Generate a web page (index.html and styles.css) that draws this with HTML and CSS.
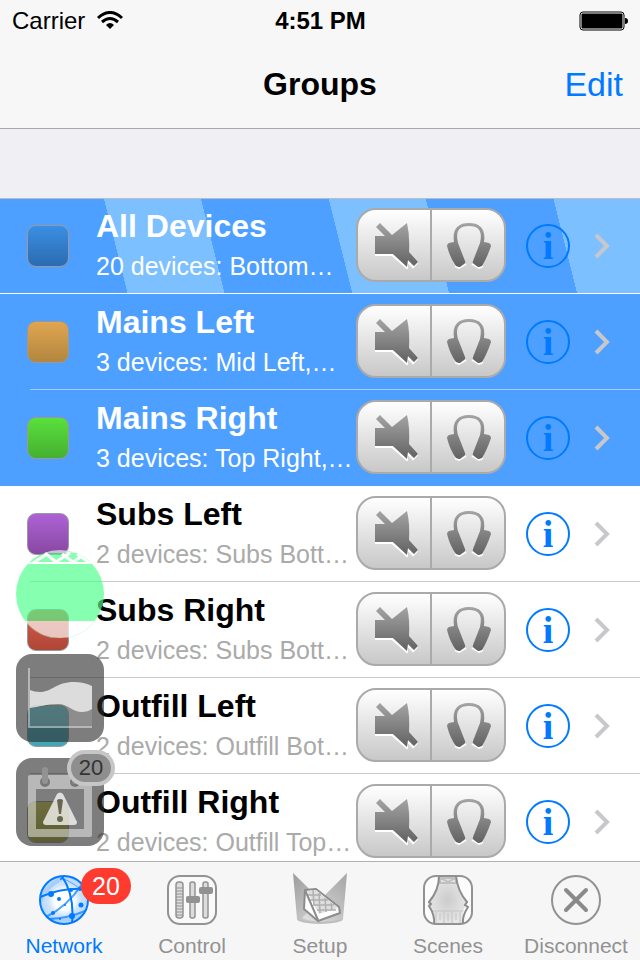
FILE: index.html
```html
<!DOCTYPE html>
<html lang="en">
<head>
    <meta charset="UTF-8">
    <meta name="viewport" content="width=device-width, initial-scale=1.0">
    <title>Groups</title>
    <link rel="stylesheet" href="styles.css">
</head>
<body>
    <!-- Shared icons -->
    <svg class="sprites" width="0" height="0" aria-hidden="true">
        <defs>
            <linearGradient id="metal" x1="0" y1="0" x2="0" y2="1">
                <stop offset="0" stop-color="#a4a4a4"/>
                <stop offset="1" stop-color="#626262"/>
            </linearGradient>
            <linearGradient id="beam-left" x1="0" y1="0" x2="1" y2="1">
                <stop offset="0" stop-color="#9c9c9c"/>
                <stop offset="1" stop-color="#e2e2e2"/>
            </linearGradient>
            <linearGradient id="beam-right" x1="1" y1="0" x2="0" y2="1">
                <stop offset="0" stop-color="#a4a4a4"/>
                <stop offset="1" stop-color="#e2e2e2"/>
            </linearGradient>
            <radialGradient id="globe-fill">
                <stop offset="0.4" stop-color="#ffffff"/>
                <stop offset="0.65" stop-color="#cfe5fb"/>
                <stop offset="1" stop-color="#b4d6fa"/>
            </radialGradient>
            <radialGradient id="stage-fill">
                <stop offset="0" stop-color="#cccccc"/>
                <stop offset="1" stop-color="#e6e6e6"/>
            </radialGradient>
            <clipPath id="globe-clip"><circle cx="28" cy="28" r="24"/></clipPath>
            <clipPath id="level-clip"><circle cx="44" cy="44" r="44"/></clipPath>
        </defs>
        <symbol id="mute" viewBox="0 0 48 48">
            <path d="M5 34H22L37 47V40L43 46L48 41" fill="none" stroke="#fff" stroke-width="2"/>
            <path d="M5 15H15L6 6L10 2L22 14L37 2Q40 15 39 31L48 41L44 45L38 39L37 46L23 33H5Z" fill="url(#metal)"/>
        </symbol>
        <symbol id="phones" viewBox="0 0 48 48">
            <path d="M11 45L15 47L22 43M28 43L35 47L39 45" fill="none" stroke="#fff" stroke-width="2"/>
            <path d="M3 25Q3 23 5 22L10 21C8 8 14 2 25 2S42 8 40 21L45 22Q47 23 47 25Q43 37 38 45Q36 46 34 46L30 43Q28 42 29 40L36 22C39 9 34 5 25 5S11 9 14 22L21 40Q22 42 20 43L16 46Q14 46 12 45Q6 37 3 25Z" fill="url(#metal)"/>
        </symbol>
        <symbol id="chevron" viewBox="0 0 16 26">
            <path d="M2 2L13 13L2 24" fill="none" stroke="#c7c7cc" stroke-width="4"/>
        </symbol>
    </svg>

    <header>
        <div class="status-bar">
            <div class="carrier">
                <span>Carrier</span>
                <svg width="26" height="20" viewBox="0 0 26 20">
                    <path d="M1 7Q13 -4 25 7M5 11Q13 4 21 11" fill="none" stroke="#000" stroke-width="3"/>
                    <path d="M9 14Q13 10 17 14L13 18Z"/>
                </svg>
            </div>
            <span class="time">4:51 PM</span>
            <div class="battery">
                <svg width="50" height="20" viewBox="0 0 50 20">
                    <rect x="1" y="1" width="44" height="18" rx="3" fill="none" stroke="#000"/>
                    <rect x="2.5" y="2.5" width="41" height="15" rx="1"/>
                    <path d="M46 7Q49 7 49 10T46 13Z"/>
                </svg>
            </div>
        </div>
        <div class="nav-bar">
            <h1>Groups</h1>
            <a href="#edit">Edit</a>
        </div>
    </header>

    <main>
        <ul class="groups">
            <li class="group selected striped">
                <span class="swatch blue"></span>
                <div class="group-text">
                    <h2>All Devices</h2>
                    <p>20 devices: Bottom…</p>
                </div>
                <div class="switch">
                    <button type="button" aria-label="Mute"><svg><use href="#mute"/></svg></button>
                    <button type="button" aria-label="Solo"><svg><use href="#phones"/></svg></button>
                </div>
                <button type="button" class="info">i</button>
                <svg class="chevron"><use href="#chevron"/></svg>
            </li>
            <li class="group selected">
                <span class="swatch orange"></span>
                <div class="group-text">
                    <h2>Mains Left</h2>
                    <p>3 devices: Mid Left,…</p>
                </div>
                <div class="switch">
                    <button type="button" aria-label="Mute"><svg><use href="#mute"/></svg></button>
                    <button type="button" aria-label="Solo"><svg><use href="#phones"/></svg></button>
                </div>
                <button type="button" class="info">i</button>
                <svg class="chevron"><use href="#chevron"/></svg>
            </li>
            <li class="group selected last-selected">
                <span class="swatch green"></span>
                <div class="group-text">
                    <h2>Mains Right</h2>
                    <p>3 devices: Top Right,…</p>
                </div>
                <div class="switch">
                    <button type="button" aria-label="Mute"><svg><use href="#mute"/></svg></button>
                    <button type="button" aria-label="Solo"><svg><use href="#phones"/></svg></button>
                </div>
                <button type="button" class="info">i</button>
                <svg class="chevron"><use href="#chevron"/></svg>
            </li>
            <li class="group">
                <span class="swatch purple"></span>
                <div class="group-text">
                    <h2>Subs Left</h2>
                    <p>2 devices: Subs Bott…</p>
                </div>
                <div class="switch">
                    <button type="button" aria-label="Mute"><svg><use href="#mute"/></svg></button>
                    <button type="button" aria-label="Solo"><svg><use href="#phones"/></svg></button>
                </div>
                <button type="button" class="info">i</button>
                <svg class="chevron"><use href="#chevron"/></svg>
            </li>
            <li class="group">
                <span class="swatch red"></span>
                <div class="group-text">
                    <h2>Subs Right</h2>
                    <p>2 devices: Subs Bott…</p>
                </div>
                <div class="switch">
                    <button type="button" aria-label="Mute"><svg><use href="#mute"/></svg></button>
                    <button type="button" aria-label="Solo"><svg><use href="#phones"/></svg></button>
                </div>
                <button type="button" class="info">i</button>
                <svg class="chevron"><use href="#chevron"/></svg>
            </li>
            <li class="group">
                <span class="swatch teal"></span>
                <div class="group-text">
                    <h2>Outfill Left</h2>
                    <p>2 devices: Outfill Bot…</p>
                </div>
                <div class="switch">
                    <button type="button" aria-label="Mute"><svg><use href="#mute"/></svg></button>
                    <button type="button" aria-label="Solo"><svg><use href="#phones"/></svg></button>
                </div>
                <button type="button" class="info">i</button>
                <svg class="chevron"><use href="#chevron"/></svg>
            </li>
            <li class="group">
                <span class="swatch yellow"></span>
                <div class="group-text">
                    <h2>Outfill Right</h2>
                    <p>2 devices: Outfill Top…</p>
                </div>
                <div class="switch">
                    <button type="button" aria-label="Mute"><svg><use href="#mute"/></svg></button>
                    <button type="button" aria-label="Solo"><svg><use href="#phones"/></svg></button>
                </div>
                <button type="button" class="info">i</button>
                <svg class="chevron"><use href="#chevron"/></svg>
            </li>
        </ul>

        <!-- Floating shortcuts over the list -->
        <div class="floating">
            <button type="button" class="level" aria-label="Level">
                <svg width="88" height="88" viewBox="0 0 88 88">
                    <g clip-path="url(#level-clip)">
                        <rect width="88" height="3" fill="#e0dce4" fill-opacity="0.8"/>
                        <rect y="3" width="88" height="68" fill="#4cff8a" fill-opacity="0.67"/>
                        <rect y="71" width="88" height="17" fill="#fff" fill-opacity="0.68"/>
                        <path d="M8 13H80" stroke="#fff" stroke-width="2"/>
                        <path d="M17 13L31 4M29 3L40 12L54 3M46 4L57 12L69 4M61 4L74 13" fill="none" stroke="#fff" stroke-width="3"/>
                    </g>
                    <path d="M9 71A44 44 0 0 0 79 71" fill="none" stroke="#b4f5cc" stroke-opacity="0.4"/>
                </svg>
            </button>
            <button type="button" class="tile" aria-label="Chart">
                <svg width="88" height="88" viewBox="0 0 88 88">
                    <path d="M14 54C24 54 32 50 42 50S56 58 66 58Q72 58 76 55V72H14Z" fill="#fff" fill-opacity="0.13"/>
                    <path d="M14 36Q18 38 24 38C36 38 40 28 58 28Q68 28 76 32V55Q72 58 66 58C56 58 52 50 42 50C30 50 24 53 14 54Z" fill="#fff" fill-opacity="0.73"/>
                    <path d="M13 14V73H76" fill="none" stroke="#fff" stroke-opacity="0.45" stroke-width="2"/>
                </svg>
            </button>
            <button type="button" class="tile" aria-label="Events">
                <svg width="88" height="88" viewBox="0 0 88 88">
                    <path fill-rule="evenodd" d="M14 17H74Q76 17 76 19V77Q76 79 74 79H14Q12 79 12 77V19Q12 17 14 17ZM20 31V71H68V31Z" fill="#fff" fill-opacity="0.46"/>
                    <circle cx="29" cy="24" r="5" fill="#777"/>
                    <circle cx="59" cy="24" r="5" fill="#777"/>
                    <path d="M29 12V23M59 12V23" stroke="#929292" stroke-width="6" stroke-linecap="round"/>
                    <path d="M41 36Q44 33 47 36L61 64Q61 67 58 67H30Q27 67 27 64Z" fill="#fff" fill-opacity="0.74"/>
                    <path d="M41 42Q44 40 47 42L45 56H43Z" fill="#666652"/>
                    <circle cx="44" cy="61" r="3" fill="#666652"/>
                </svg>
                <span class="count">20</span>
            </button>
        </div>
    </main>

    <nav class="tab-bar">
        <a href="#network" class="active">
            <svg width="56" height="56" viewBox="0 0 56 56">
                <circle cx="28" cy="28" r="24" fill="url(#globe-fill)"/>
                <g clip-path="url(#globe-clip)" fill="none" stroke="#007aff">
                    <path d="M4 30Q9 15 25 7M14 46Q28 52 46 42" stroke="#a8cffa" stroke-width="4"/>
                    <path d="M4 25Q26 15 52 17M25 3Q39 22 36 52" stroke-width="2"/>
                    <path d="M10 45Q32 34 46 12M4 46Q22 50 52 38" stroke-width="2" stroke-opacity="0.7"/>
                    <path d="M25 6Q38 10 52 24" stroke-opacity="0.6"/>
                </g>
                <g fill="#007aff">
                    <circle cx="15" cy="22" r="3"/>
                    <circle cx="35" cy="18" r="2"/>
                    <circle cx="44" cy="17" r="2"/>
                    <circle cx="23" cy="27" r="2"/>
                    <circle cx="45" cy="33" r="2.5"/>
                    <circle cx="17" cy="41" r="2"/>
                    <circle cx="36" cy="44" r="3"/>
                    <circle cx="25" cy="7" r="1"/>
                    <circle cx="29" cy="33" r="1"/>
                    <circle cx="24" cy="47" r="1"/>
                </g>
                <circle cx="28" cy="28" r="24" fill="none" stroke="#007aff" stroke-width="2"/>
            </svg>
            <span class="badge">20</span>
            <span>Network</span>
        </a>
        <a href="#control">
            <svg width="56" height="56" viewBox="0 0 56 56">
                <rect x="4" y="4" width="48" height="48" rx="12" fill="#fff" fill-opacity="0.4" stroke="#929292" stroke-width="2"/>
                <g fill="#dcdcdc" stroke="#929292" stroke-width="1.5">
                    <rect x="12" y="10" width="7" height="36" rx="3"/>
                    <rect x="26" y="10" width="5" height="36" rx="2"/>
                    <rect x="39" y="10" width="5" height="36" rx="2"/>
                </g>
                <path d="M12 16H19M12 19H19M12 22H19M12 25H19M12 28H19M12 31H19M12 34H19M12 37H19M12 40H19M12 43H19" stroke="#929292"/>
                <rect x="22" y="24" width="14" height="7" rx="2" fill="#929292"/>
                <rect x="35" y="15" width="14" height="7" rx="2" fill="#929292"/>
            </svg>
            <span>Control</span>
        </a>
        <a href="#setup">
            <svg width="56" height="56" viewBox="0 0 56 56">
                <ellipse cx="28" cy="47" rx="23" ry="5" fill="#bdbdbd"/>
                <path d="M1 1L47 46Q28 53 5 47Z" fill="url(#beam-left)"/>
                <path d="M55 1L10 46Q28 53 51 47Z" fill="url(#beam-right)"/>
                <path d="M13 18L24 17L47 35L48 41L26 49L12 37Z" fill="#fff" stroke="#8c8c8c" stroke-width="2" stroke-linejoin="round"/>
                <path d="M15 19L24 18L46 36L27 42Z" fill="#dedede"/>
                <path d="M16 23H29M18 28H36M22 33H42M25 38H44M21 18L22 34M27 21L28 41M33 26L34 40M39 31L40 38" fill="none" stroke="#b0b0b0" stroke-width="1.5"/>
                <path d="M13 18L26 48" stroke="#8c8c8c" stroke-width="2"/>
            </svg>
            <span>Setup</span>
        </a>
        <a href="#scenes">
            <svg width="56" height="56" viewBox="0 0 56 56">
                <rect x="4" y="4" width="48" height="48" rx="12" fill="#fff" fill-opacity="0.7"/>
                <path d="M19 4H37C37 14 41 24 47 31L44 37Q42 44 43 52H14Q15 44 10 37L8 31C15 24 19 14 19 4Z" fill="url(#stage-fill)"/>
                <path d="M20 6H36V11H20ZM21 6L28 10L35 6" fill="none" stroke="#c0c0c0" stroke-width="2"/>
                <path d="M12 39H43M16 40V51M20 41V48M24 40V51M28 41V49M32 40V51M36 41V48M40 40V51" stroke="#c4c4c4"/>
                <path d="M19 4C19 14 15 23 9 30L11 32L9 34Q15 43 14 52M36 4C37 14 41 23 47 30L45 33L48 35Q42 44 43 52" fill="none" stroke="#8c8c8c" stroke-width="2"/>
                <rect x="4" y="4" width="48" height="48" rx="12" fill="none" stroke="#929292" stroke-width="2"/>
            </svg>
            <span>Scenes</span>
        </a>
        <a href="#disconnect">
            <svg width="56" height="56" viewBox="0 0 56 56">
                <circle cx="28" cy="28" r="24" fill="none" stroke="#929292" stroke-width="2"/>
                <path d="M18 18L38 38M38 18L18 38" stroke="#8a8a8a" stroke-width="4" stroke-linecap="round"/>
            </svg>
            <span>Disconnect</span>
        </a>
    </nav>
</body>
</html>
```
FILE: styles.css
```css
* {
    box-sizing: border-box;
}

body {
    margin: 0;
    display: flex;
    flex-direction: column;
    height: 100vh;
    font-family: "Liberation Sans", Arial, sans-serif;
    background: #efeff4;
    color: #000;
}

h1, h2, p, ul {
    margin: 0;
    padding: 0;
}

button {
    margin: 0;
    padding: 0;
    border: none;
    background: none;
    font-family: inherit;
    cursor: pointer;
}

a {
    color: #007aff;
    text-decoration: none;
}

.sprites {
    position: absolute;
}

/* Header */
header {
    background: #f7f7f7;
    border-bottom: 1px solid #a7a7aa;
}

.status-bar {
    display: grid;
    grid-template-columns: 1fr auto 1fr;
    align-items: center;
    height: 40px;
    padding: 0 11px 0 12px;
    font-size: 24px;
    line-height: 42px;
}

.carrier {
    display: flex;
    align-items: center;
    gap: 12px;
}

.time {
    font-weight: bold;
}

.battery {
    display: flex;
    justify-content: flex-end;
}

.nav-bar {
    display: grid;
    grid-template-columns: 1fr auto 1fr;
    align-items: center;
    height: 88px;
    padding: 0 17px;
}

.nav-bar h1 {
    grid-column: 2;
    font-size: 32px;
}

.nav-bar a {
    justify-self: end;
    font-size: 34px;
}

/* Group list */
main {
    position: relative;
    flex: 1;
    min-height: 0;
    padding-top: 69px;
    overflow: hidden;
}

.groups {
    list-style: none;
}

.group {
    position: relative;
    display: flex;
    align-items: center;
    height: 96px;
    padding: 0 30px 0 27px;
    background: #fff;
}

.group::after {
    content: "";
    position: absolute;
    left: 30px;
    right: 0;
    bottom: 0;
    height: 1px;
    background: #c8c7cc;
}

.selected {
    background: #4da0ff;
    color: #fff;
}

.selected::after {
    background: #a6cdf8;
}

.last-selected::after {
    display: none;
}

.striped {
    padding-bottom: 1px;
    border-top: 1px solid #b9bcc6;
    background: repeating-linear-gradient(76deg, #4da0ff 0 124px, #7dc0ff 124px 218px);
}

.striped::after {
    left: 0;
    background: #fff;
}

.swatch {
    width: 42px;
    height: 42px;
    border: 1px solid #999;
    border-radius: 9px;
}

.blue { background: linear-gradient(#3a8ee4, #2c6bb0); }
.orange { background: linear-gradient(#e0a650, #b28640); }
.green { background: linear-gradient(#5ae03c, #46b030); }
.purple { background: linear-gradient(#ae62d6, #8848a2); }
.red { background: linear-gradient(#d65e4a, #ae4638); }
.teal { background: linear-gradient(#4ac0d0, #44a4b4); }
.yellow { background: linear-gradient(#d8d860, #a8a848); }

.group-text {
    flex: 1;
    min-width: 0;
    padding-left: 27px;
    white-space: nowrap;
}

.group-text h2 {
    font-size: 32px;
    line-height: 40px;
}

.group-text p {
    font-size: 25px;
    line-height: 40px;
    color: #aaa;
}

.selected p {
    color: #fff;
}

.switch {
    display: flex;
    width: 150px;
    height: 74px;
    margin-bottom: 2px;
    border: 2px solid #aaa;
    border-radius: 20px;
    background: linear-gradient(#fff, #c8c8c8);
}

.switch button {
    flex: 1;
    display: flex;
    align-items: center;
    justify-content: center;
}

.switch button + button {
    border-left: 2px solid #aaa;
}

.switch svg {
    width: 48px;
    height: 48px;
}

.info {
    width: 44px;
    height: 44px;
    margin: 0 24px 0 20px;
    border: 2px solid #007aff;
    border-radius: 50%;
    font-family: "Liberation Serif", "Times New Roman", serif;
    font-size: 38px;
    font-weight: bold;
    line-height: 36px;
    color: #007aff;
}

.chevron {
    width: 16px;
    height: 26px;
}

/* Floating shortcuts */
.floating {
    position: absolute;
    left: 16px;
    bottom: 15px;
    display: flex;
    flex-direction: column;
    gap: 16px;
}

.floating button {
    position: relative;
    width: 88px;
    height: 88px;
}

.floating svg {
    display: block;
}

.level {
    border-radius: 50%;
}

.tile {
    border-radius: 16px;
    background: rgba(42, 42, 42, 0.61);
}

.count {
    position: absolute;
    top: -8px;
    right: -11px;
    width: 48px;
    height: 36px;
    border: 4px solid #c6c6c6;
    border-radius: 18px;
    background: #8e8e8e;
    font-size: 22px;
    line-height: 28px;
    color: #333;
}

/* Tab bar */
.tab-bar {
    display: flex;
    height: 99px;
    border-top: 1px solid #b2b2b2;
    background: #f6f6f6;
}

.tab-bar a {
    position: relative;
    flex: 1;
    display: flex;
    flex-direction: column;
    align-items: center;
    gap: 4px;
    padding-top: 10px;
    font-size: 21px;
    line-height: 28px;
    color: #929292;
}

.tab-bar svg {
    flex-shrink: 0;
}

.tab-bar .active {
    color: #007aff;
}

.badge {
    position: absolute;
    top: 6px;
    left: 81px;
    width: 50px;
    height: 36px;
    border-radius: 18px;
    background: #ff3b30;
    font-size: 25px;
    line-height: 36px;
    text-align: center;
    color: #fff;
}
```
